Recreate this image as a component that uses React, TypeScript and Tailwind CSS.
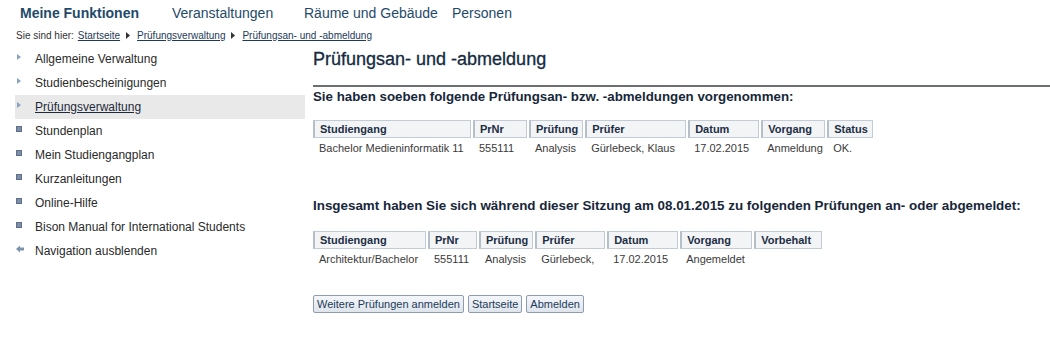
import React from 'react';

const font = { fontFamily: '"Liberation Sans", Arial, sans-serif' };

function Tri() {
  return (
    <svg width="6" height="8" viewBox="0 0 6 8" className="shrink-0">
      <path d="M1 1 L5 4 L1 7 Z" fill="#8aa2bd" />
    </svg>
  );
}

function Sq() {
  return <span className="inline-block w-[6px] h-[6px] bg-[#7d8fa6] border border-[#5e7088] shrink-0" />;
}

function Back() {
  return (
    <svg width="8" height="8" viewBox="0 0 8 8" className="shrink-0">
      <path d="M0 4 L4 0.5 L4 2.5 L8 2.5 L8 5.5 L4 5.5 L4 7.5 Z" fill="#7d93ad" />
    </svg>
  );
}

const menu = [
  { label: 'Allgemeine Verwaltung', icon: 'tri' },
  { label: 'Studienbescheinigungen', icon: 'tri' },
  { label: 'Prüfungsverwaltung', icon: 'tri', active: true },
  { label: 'Stundenplan', icon: 'sq' },
  { label: 'Mein Studiengangplan', icon: 'sq' },
  { label: 'Kurzanleitungen', icon: 'sq' },
  { label: 'Online-Hilfe', icon: 'sq' },
  { label: 'Bison Manual for International Students', icon: 'sq' },
  { label: 'Navigation ausblenden', icon: 'back' },
];

function Table({ cols, row }: { cols: [string, number][]; row: string[] }) {
  return (
    <table className="border-separate border-spacing-x-[2px] border-spacing-y-0 -ml-[2px] text-[11px]">
      <thead>
        <tr>
          {cols.map(([c, w]) => (
            <th
              key={c}
              style={{ width: w }}
              className="h-[17px] text-left font-bold text-[#1c2e44] pl-[5px] pr-1 bg-[#f3f4f6] border border-[#c3ccd6] border-l-[2px] border-l-[#b5bfca]"
            >
              {c}
            </th>
          ))}
        </tr>
      </thead>
      <tbody>
        <tr>
          {row.map((c, i) => (
            <td key={i} className="pl-[6px] h-[20px] text-[#3a3a3a] whitespace-nowrap">
              {c}
            </td>
          ))}
        </tr>
      </tbody>
    </table>
  );
}

export default function App() {
  return (
    <main className="w-[1050px] h-[349px] bg-white overflow-hidden" style={font}>
      <nav className="flex items-center h-[26px] pl-[20px] text-[14px] text-[#1f4a6a]">
        <span className="font-bold w-[152px]">Meine Funktionen</span>
        <span className="w-[132px]">Veranstaltungen</span>
        <span className="w-[148px]">Räume und Gebäude</span>
        <span>Personen</span>
      </nav>
      <div className="flex items-center gap-[4px] pl-[16px] h-[18px] text-[10px] text-[#333]">
        <span>Sie sind hier:</span>
        <a className="underline text-[#1d3a5a]">Startseite</a>
        <svg width="5" height="7" viewBox="0 0 5 7" className="mx-[2px]"><path d="M0 0 L4 3.5 L0 7 Z" fill="#333" /></svg>
        <a className="underline text-[#1d3a5a]">Prüfungsverwaltung</a>
        <svg width="5" height="7" viewBox="0 0 5 7" className="mx-[2px]"><path d="M0 0 L4 3.5 L0 7 Z" fill="#333" /></svg>
        <a className="underline text-[#1d3a5a]">Prüfungsan- und -abmeldung</a>
      </div>
      <div className="flex">
        <aside className="w-[313px] pl-[15px] pr-[8px] pt-[3px]">
          {menu.map((m) => (
            <div
              key={m.label}
              className={`flex items-center h-[24px] text-[12px] text-[#2a2a2a] ${m.active ? 'bg-[#e9e9ea]' : ''}`}
            >
              <span className="w-[20px] pl-[1px] flex justify-start items-center -mt-[4px]">
                {m.icon === 'tri' ? <Tri /> : m.icon === 'sq' ? <Sq /> : <Back />}
              </span>
              <span className={m.active ? 'underline text-[#1d2a3a]' : ''}>{m.label}</span>
            </div>
          ))}
        </aside>
        <section className="flex-1">
          <h1 className="text-[18px] text-[#152a40] h-[28px] leading-[28px] mt-[1px] [-webkit-text-stroke:0.3px_#152a40]">Prüfungsan- und -abmeldung</h1>
          <div className="h-[2px] bg-[#6b6f74] mt-[12px]" />
          <h2 className="text-[13.3px] font-bold text-[#17273a] mb-[13px]">
            Sie haben soeben folgende Prüfungsan- bzw. -abmeldungen vorgenommen:
          </h2>
          <Table
            cols={[['Studiengang', 158], ['PrNr', 54], ['Prüfung', 51], ['Prüfer', 101], ['Datum', 71], ['Vorgang', 64], ['Status', 46]]}
            row={['Bachelor Medieninformatik 11', '555111', 'Analysis', 'Gürlebeck, Klaus', '17.02.2015', 'Anmeldung', 'OK.']}
          />
          <h2 className="text-[13.4px] font-bold text-[#17273a] mt-[38px] mb-[14px]">
            Insgesamt haben Sie sich während dieser Sitzung am 08.01.2015 zu folgenden Prüfungen an- oder abgemeldet:
          </h2>
          <Table
            cols={[['Studiengang', 113], ['PrNr', 49], ['Prüfung', 53], ['Prüfer', 70], ['Datum', 71], ['Vorgang', 72], ['Vorbehalt', 68]]}
            row={['Architektur/Bachelor', '555111', 'Analysis', 'Gürlebeck,', '17.02.2015', 'Angemeldet', '']}
          />
          <div className="flex gap-[4px] mt-[26px]">
            {['Weitere Prüfungen anmelden', 'Startseite', 'Abmelden'].map((b) => (
              <button
                key={b}
                className="h-[18px] px-[3px] text-[11px] text-[#1d3a5a] bg-gradient-to-b from-[#f4f7fa] to-[#dfe5ec] border border-[#8d9caf] rounded-[2px]"
              >
                {b}
              </button>
            ))}
          </div>
        </section>
      </div>
    </main>
  );
}
